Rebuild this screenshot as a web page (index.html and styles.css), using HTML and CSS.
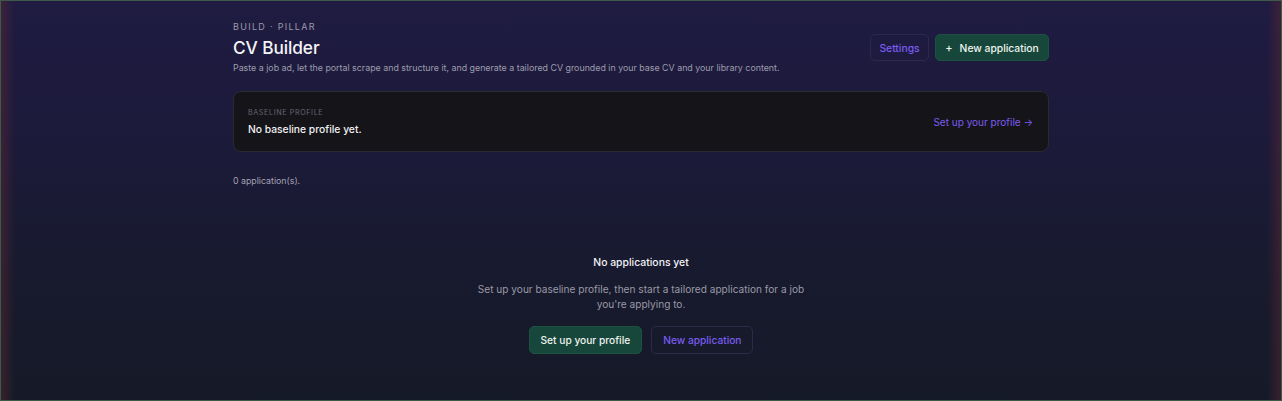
FILE: index.html
```html
<!DOCTYPE html>
<html lang="en">
<head>
<meta charset="utf-8">
<title>CV Builder</title>
<link rel="stylesheet" href="styles.css">
</head>
<body>
<div class="frame">
  <main class="page">
    <header class="head">
      <div class="head-text">
        <div class="eyebrow">BUILD · PILLAR</div>
        <h1 class="title">CV Builder</h1>
        <p class="lead">Paste a job ad, let the portal scrape and structure it, and generate a tailored CV grounded in your base CV and your library content.</p>
      </div>
      <div class="head-actions">
        <button class="btn btn-ghost btn-settings">Settings</button>
        <button class="btn btn-primary btn-new"><span class="plus">+</span>New application</button>
      </div>
    </header>

    <section class="card">
      <div class="card-text">
        <div class="card-label">BASELINE PROFILE</div>
        <div class="card-value">No baseline profile yet.</div>
      </div>
      <a class="card-link" href="#">Set up your profile →</a>
    </section>

    <p class="count">0 application(s).</p>

    <section class="empty">
      <h2 class="empty-title">No applications yet</h2>
      <p class="empty-desc">Set up your baseline profile, then start a tailored application for a job you're applying to.</p>
      <div class="empty-actions">
        <button class="btn btn-primary btn-lg">Set up your profile</button>
        <button class="btn btn-ghost btn-lg">New application</button>
      </div>
    </section>
  </main>
</div>
</body>
</html>
```

FILE: styles.css
```css
* { box-sizing: border-box; }
html, body { margin: 0; padding: 0; height: 100%; }
body {
  font-family: Inter, "Noto Sans", sans-serif;
  background: #16182a;
  color: #ececf1;
}
.frame {
  height: 401px;
  border: 1px solid #3d5a48;
  background:
    linear-gradient(90deg, rgba(90,40,50,0.5) 0px, rgba(90,40,50,0) 14px, rgba(90,40,50,0) calc(100% - 14px), rgba(90,40,50,0.5) 100%),
    linear-gradient(180deg, #1f1b42 0%, #1c1a3a 35%, #171a2c 75%, #151a28 100%);
  overflow: hidden;
}
.page {
  width: 816px;
  margin: 0 auto;
  padding-top: 20px;
}
.head {
  display: flex;
  justify-content: space-between;
  align-items: flex-start;
}
.eyebrow {
  font-size: 9px;
  letter-spacing: 1.3px;
  color: #9b9aab;
  line-height: 12px;
}
.title {
  margin: 3px 0 0;
  font-size: 17.3px;
  font-weight: 500;
  line-height: 24px;
  color: #f4f4f7;
  letter-spacing: -0.1px;
}
.lead {
  margin: 1px 0 0;
  font-size: 8.85px;
  line-height: 13px;
  color: #9d9cad;
}
.head-actions {
  display: flex;
  gap: 6px;
  margin-top: 13px;
}
.btn {
  font-family: inherit;
  font-size: 10.3px;
  font-weight: 500;
  border-radius: 5px;
  height: 27px;
  padding: 0 9px;
  cursor: pointer;
  display: inline-flex;
  align-items: center;
  justify-content: center;
}
.btn-ghost {
  background: transparent;
  border: 1px solid #2c2a48;
  color: #7a5cf0;
}
.btn-primary {
  background: #17473a;
  border: 1px solid #1d5243;
  color: #eef3f0;
}
.btn-settings { width: 59px; }
.btn-new { width: 114px; }
.plus { margin-right: 7px; font-size: 11px; }
.card {
  margin-top: 17px;
  height: 61px;
  background: #151419;
  border: 1px solid #2a2a33;
  border-radius: 8px;
  display: flex;
  align-items: center;
  justify-content: space-between;
  padding: 0 15px 0 14px;
}
.card-label {
  font-size: 7.2px;
  letter-spacing: 0.6px;
  color: #646470;
  line-height: 10px;
}
.card-value {
  margin-top: 4px;
  font-size: 10.3px;
  font-weight: 500;
  color: #f0f0f3;
  line-height: 14px;
}
.card-link {
  color: #7a5cf0;
  font-size: 10px;
  text-decoration: none;
}
.count {
  margin: 22px 0 0;
  font-size: 8.8px;
  color: #a3a2b2;
  line-height: 13px;
}
.empty {
  margin-top: 69px;
  display: flex;
  flex-direction: column;
  align-items: center;
  text-align: center;
}
.empty-title {
  margin: 0;
  font-size: 10.4px;
  font-weight: 500;
  color: #f2f2f5;
  line-height: 14px;
}
.empty-desc {
  margin: 12px 0 0;
  width: 332px;
  font-size: 10.1px;
  line-height: 15px;
  color: #9a99a6;
}
.empty-actions {
  display: flex;
  gap: 9px;
  margin-top: 14px;
}
.btn-lg {
  height: 28px;
  font-size: 10.2px;
  padding: 0 11px;
}
```
